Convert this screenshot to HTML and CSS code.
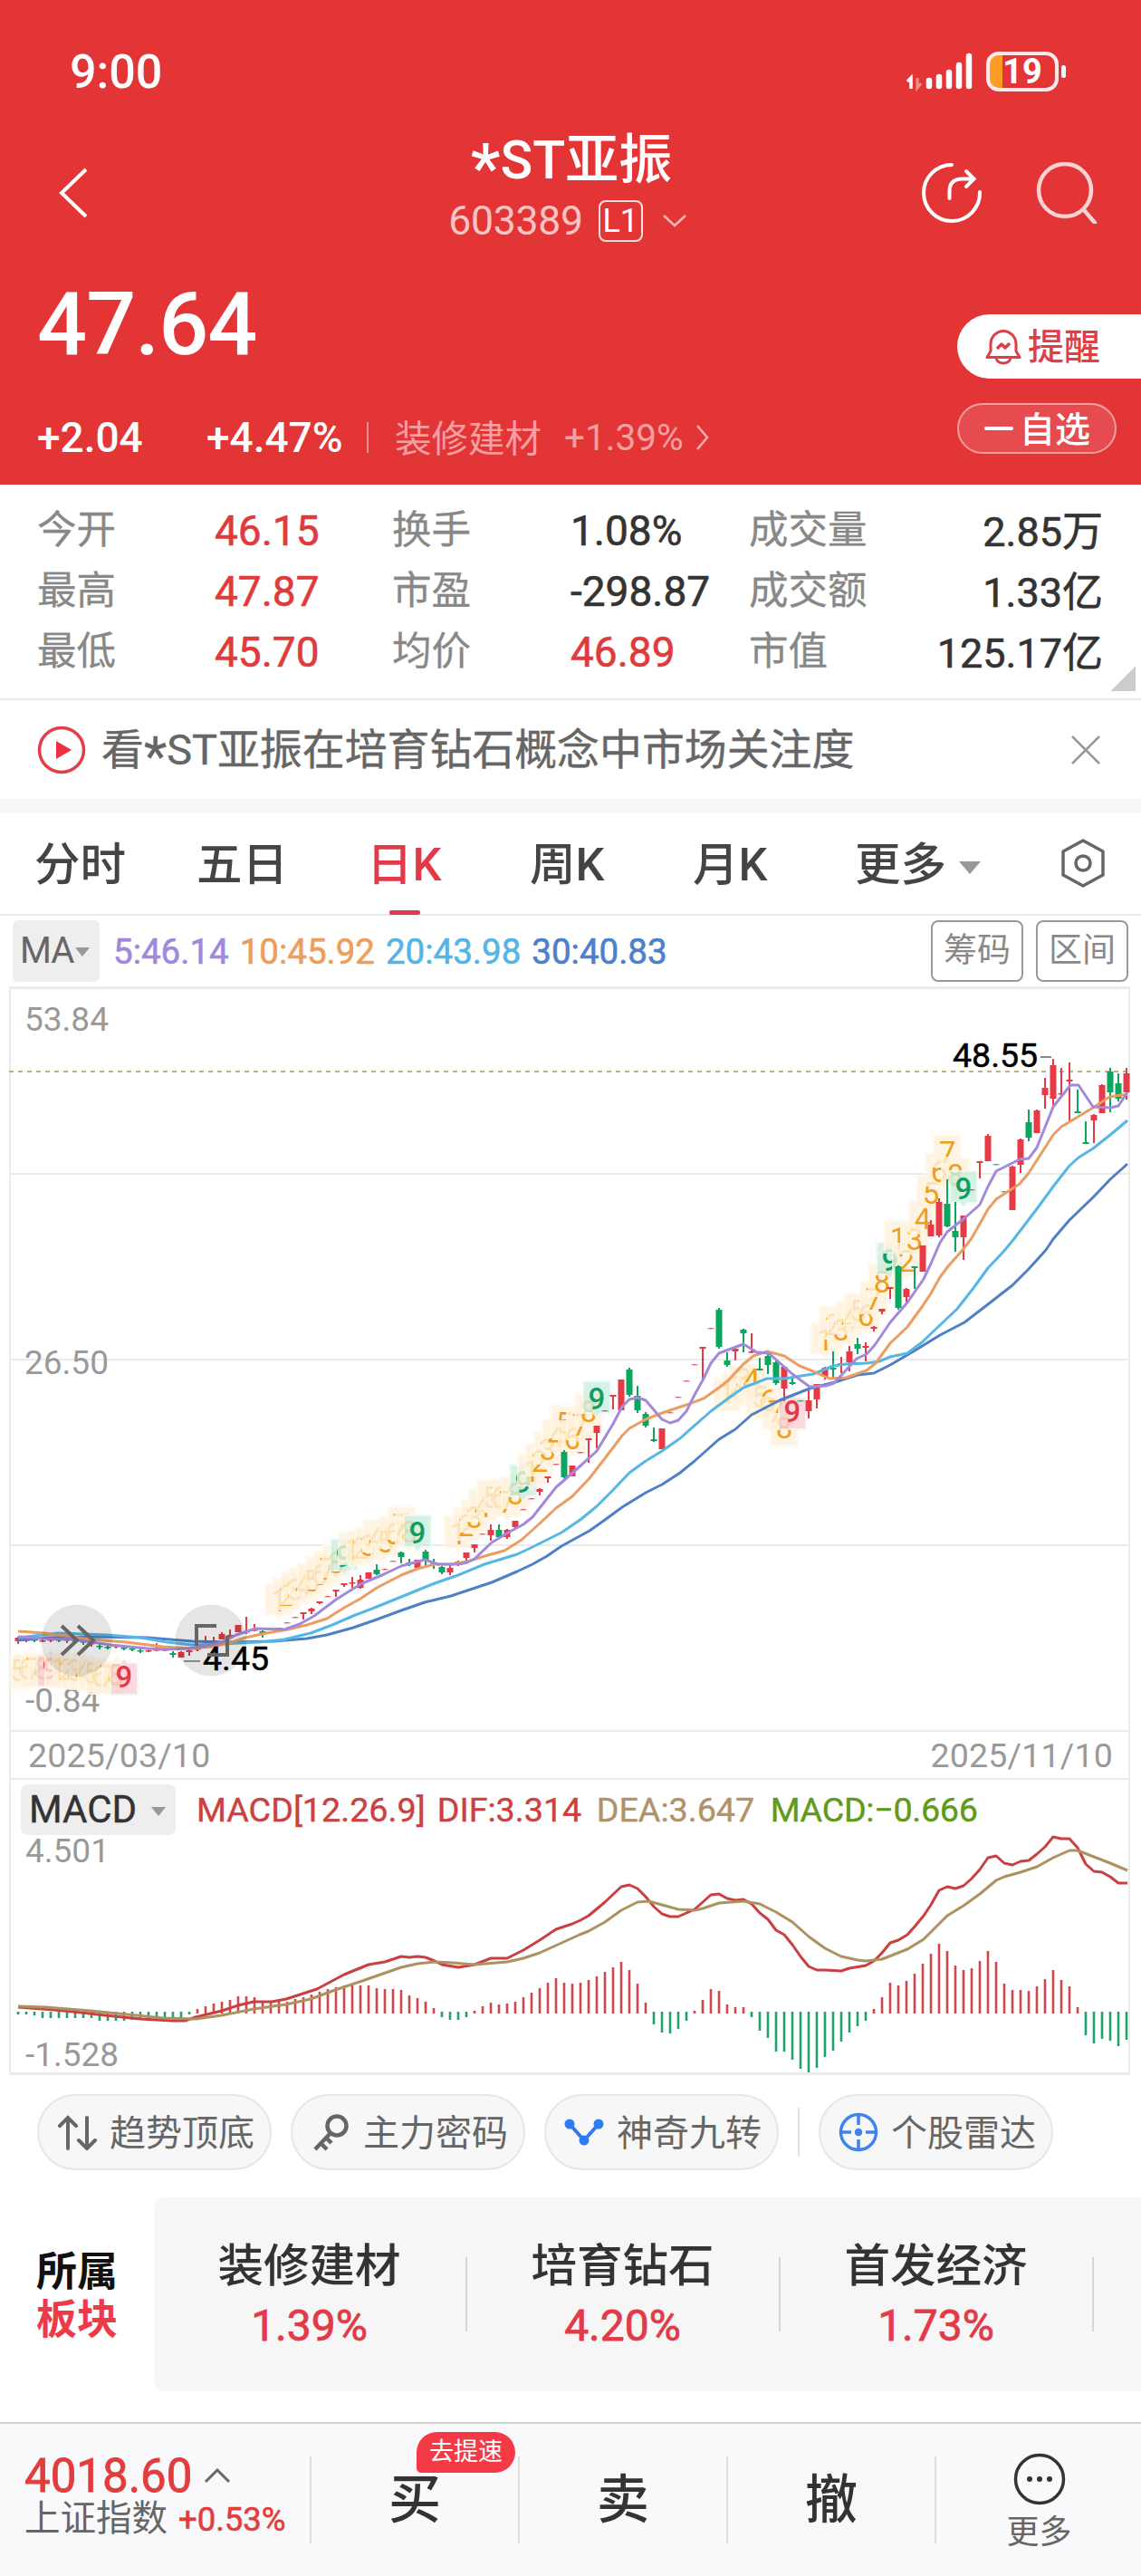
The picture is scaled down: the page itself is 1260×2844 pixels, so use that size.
FILE: index.html
```html
<!DOCTYPE html>
<html lang="zh-CN">
<head>
    <meta charset="UTF-8">
    <meta name="viewport" content="width=device-width, initial-scale=1.0">
    <title>*ST亚振 603389</title>
    <link rel="stylesheet" href="styles.css">
</head>
<body>
    <header class="top">
        <div class="status-bar">
            <span class="clock">9:00</span>
            <div class="status-icons">
                <svg width="74" height="44" viewBox="0 0 74 44">
                    <path d="M1 33l4-4v12" fill="none" stroke="#fff" stroke-width="3.500"/>
                    <path d="M12 29v11l4-5" fill="none" stroke="#f08f8f" stroke-width="3"/>
                    <g stroke="#fff" stroke-width="6.500" stroke-linecap="round">
                        <path d="M25 32v6M36 28v10M47 23v15M58 15v23M69 5v33"/>
                    </g>
                </svg>
                <div class="battery"><span>19</span></div>
            </div>
        </div>

        <div class="nav">
            <svg class="back" width="34" height="58" viewBox="0 0 34 58">
                <path d="M31 3L4 29l27 26" fill="none" stroke="#fff" stroke-width="4"/>
            </svg>
            <div class="title">
                <h1><span class="star">*</span>ST亚振</h1>
                <div class="code">
                    <span>603389</span>
                    <span class="level">L1</span>
                    <svg width="28" height="16" viewBox="0 0 28 16"><path d="M2 2l12 11L26 2" fill="none" stroke="#f8b4b4" stroke-width="2.5"/></svg>
                </div>
            </div>
            <div class="nav-icons">
                <svg width="68" height="68" viewBox="0 0 68 68" fill="none" stroke="#fff" stroke-width="4" stroke-linecap="round">
                    <path d="M34 3A31 31 0 1 0 65 33"/>
                    <path d="M31.500 40V32Q31.500 18.500 46 18.500H57M50 10l8.500 8.500L50 27"/>
                </svg>
                <svg width="68" height="68" viewBox="0 0 68 68" fill="none" stroke="#fbd3d3" stroke-width="4.500" stroke-linecap="round">
                    <circle cx="32" cy="31" r="29"/>
                    <path d="M54 54l11 13"/>
                </svg>
            </div>
        </div>

        <div class="quote">
            <div>
                <div class="price">47.64</div>
                <div class="change">
                    <span class="diff">+2.04</span>
                    <span class="pct">+4.47%</span>
                    <i></i>
                    <span class="sector">装修建材</span>
                    <span class="sector-pct">+1.39%</span>
                    <svg width="16" height="30" viewBox="0 0 16 30"><path d="M2 2l11 13L2 28" fill="none" stroke="#f6b0b0" stroke-width="2.5"/></svg>
                </div>
            </div>
            <div class="pills">
                <div class="pill remind">
                    <svg width="40" height="40" viewBox="0 0 40 40" fill="none" stroke="#dc3f45" stroke-width="3" stroke-linejoin="round">
                        <path d="M2 31.500l4-7V17a14 14.500 0 0 1 28 0v7.500l4 7zM12 33q2 5 8 5t8-5"/>
                        <path d="M13 22l5-5 4 4 5-5" stroke-width="3.500"/>
                    </svg>
                    <span>提醒</span>
                </div>
                <div class="pill watch"><b></b><span>自选</span></div>
            </div>
        </div>
    </header>

    <section class="stats">
        <span class="label">今开</span><span class="up">46.15</span>
        <span class="label">换手</span><span>1.08%</span>
        <span class="label">成交量</span><span class="end">2.85万</span>
        <span class="label">最高</span><span class="up">47.87</span>
        <span class="label">市盈</span><span>-298.87</span>
        <span class="label">成交额</span><span class="end">1.33亿</span>
        <span class="label">最低</span><span class="up">45.70</span>
        <span class="label">均价</span><span class="up">46.89</span>
        <span class="label">市值</span><span class="end">125.17亿</span>
        <div class="corner"></div>
    </section>

    <section class="banner">
        <svg width="54" height="54" viewBox="0 0 54 54">
            <circle cx="27" cy="27" r="24.500" fill="none" stroke="#e43c48" stroke-width="3.500"/>
            <path d="M21 17l17 10-17 10z" fill="#f0303e"/>
        </svg>
        <p>看<span class="star">*</span>ST亚振在培育钻石概念中市场关注度</p>
        <svg width="32" height="32" viewBox="0 0 32 32"><path d="M1 1l30 30M31 1L1 31" stroke="#999" stroke-width="2.500"/></svg>
    </section>

    <nav class="tabs">
        <span>分时</span>
        <span>五日</span>
        <span class="active">日K</span>
        <span>周K</span>
        <span>月K</span>
        <span>更多<i class="arrow"></i></span>
        <svg width="50" height="56" viewBox="0 0 50 56" fill="none" stroke="#666" stroke-width="3.500" stroke-linejoin="round">
            <path d="M25 3l22 12v26L25 53 3 41V15z"/>
            <circle cx="25" cy="28" r="8"/>
        </svg>
    </nav>

    <div class="ma-row">
        <div class="ma-select">MA<i class="arrow small"></i></div>
        <div class="ma-values">
            <span class="ma5">5:46.14</span>
            <span class="ma10">10:45.92</span>
            <span class="ma20">20:43.98</span>
            <span class="ma30">30:40.83</span>
        </div>
        <div class="outline-btn">筹码</div>
        <div class="outline-btn">区间</div>
    </div>

    <div class="charts">
        <svg id="kline" width="1234" height="820" viewBox="12 12 1234 820"></svg>
        <div class="dates"><span>2025/03/10</span><span>2025/11/10</span></div>
        <div class="macd-head">
            <div class="macd-select">MACD<i class="arrow small"></i></div>
            <span class="dif">MACD[12.26.9]</span>
            <span class="dif second">DIF:3.314</span>
            <span class="dea">DEA:3.647</span>
            <span class="macd">MACD:−0.666</span>
        </div>
        <svg id="macd" width="1234" height="258" viewBox="12 70 1234 258"></svg>
    </div>

    <div class="chips">
        <div class="chip">
            <svg width="44" height="40" viewBox="0 0 44 40" fill="none" stroke="#666" stroke-width="4" stroke-linecap="round"><path d="M12 38V4M3 13l9-9 9 9M33 4v34M24 29l9 9 9-9"/></svg>
            <span>趋势顶底</span>
        </div>
        <div class="chip">
            <svg width="44" height="44" viewBox="0 0 44 44" fill="none" stroke="#666" stroke-width="4.500"><circle cx="29" cy="15" r="10.500"/><path d="M22 23L5 41M11 34l7 7M17 28l6 6"/></svg>
            <span>主力密码</span>
        </div>
        <div class="chip">
            <svg width="44" height="32" viewBox="0 0 44 32" stroke="#2f7bf6" fill="#2f7bf6" stroke-width="4"><path d="M6 7l16 18L38 7" fill="none"/><circle cx="6" cy="7" r="3.500"/><circle cx="22" cy="25" r="3.500"/><circle cx="38" cy="7" r="3.500"/></svg>
            <span>神奇九转</span>
        </div>
        <i></i>
        <div class="chip">
            <svg width="44" height="44" viewBox="0 0 44 44" fill="none" stroke="#3f83ee" stroke-width="3.500"><circle cx="22" cy="22" r="19.500"/><path d="M22 2v12M22 30v12M2 22h12M30 22h12"/><circle cx="22" cy="22" r="2.500" fill="#3f83ee"/></svg>
            <span>个股雷达</span>
        </div>
    </div>

    <section class="blocks">
        <div class="blocks-title">所属<em>板块</em></div>
        <div class="blocks-list">
            <div class="block"><span>装修建材</span><b>1.39%</b></div>
            <div class="block"><span>培育钻石</span><b>4.20%</b></div>
            <div class="block"><span>首发经济</span><b>1.73%</b></div>
        </div>
    </section>

    <footer class="bottom">
        <div class="index">
            <div class="index-value">4018.60
                <svg width="30" height="18" viewBox="0 0 30 18"><path d="M2 16L15 3l13 13" fill="none" stroke="#666" stroke-width="3"/></svg>
            </div>
            <div class="index-name">上证指数<span>+0.53%</span></div>
        </div>
        <div class="action">买<span class="badge">去提速</span></div>
        <div class="action">卖</div>
        <div class="action">撤</div>
        <div class="more">
            <svg width="58" height="58" viewBox="0 0 58 58"><circle cx="29" cy="29" r="26.500" fill="none" stroke="#333" stroke-width="3.500"/><g fill="#333"><circle cx="18" cy="29" r="3"/><circle cx="29" cy="29" r="3"/><circle cx="40" cy="29" r="3"/></g></svg>
            更多
        </div>
    </footer>

    <script src="chart.js"></script>
</body>
</html>
```

FILE: styles.css
```css
* {
    box-sizing: border-box;
}
body {
    margin: 0;
    width: 1260px;
    height: 2844px;
    background: #fff;
    color: #333;
    font-family: Roboto, "Noto Sans CJK SC", sans-serif;
    display: flex;
    flex-direction: column;
    overflow: hidden;
}
svg {
    display: block;
    flex-shrink: 0;
}
i, em {
    font-style: normal;
}

/* red header */
.top {
    height: 535px;
    background: #e43536;
    color: #fff;
}
.status-bar {
    height: 118px;
    padding: 40px 84px 0 77px;
    display: flex;
    align-items: center;
    justify-content: space-between;
}
.clock {
    font-size: 52px;
    font-weight: 500;
}
.status-icons {
    display: flex;
    align-items: center;
    gap: 14px;
}
.battery {
    position: relative;
    width: 80px;
    height: 44px;
    margin-right: 7px;
    border: 4px solid #fdeaea;
    border-radius: 14px;
    background: linear-gradient(90deg, #fb9d24 14px, #e43536 14px);
    text-align: center;
    font-size: 38px;
    font-weight: 700;
    line-height: 37px;
}
.battery::after {
    content: "";
    position: absolute;
    right: -12px;
    top: 11px;
    width: 5px;
    height: 14px;
    border-radius: 3px;
    background: #fff;
}
.nav {
    height: 164px;
    padding: 0 48px 0 64px;
    display: grid;
    grid-template-columns: 1fr auto 1fr;
    align-items: center;
}
.back {
    margin-top: 26px;
}
.title {
    display: flex;
    flex-direction: column;
    align-items: center;
    gap: 6px;
    margin: 9px 22px 0 0;
}
h1 {
    margin: 0 0 0 8px;
    font-size: 59px;
    font-weight: 500;
    line-height: 72px;
}
.star {
    position: relative;
    top: 0.2em;
    font-size: 1.25em;
    line-height: 1px;
}
.code {
    height: 50px;
    display: flex;
    align-items: center;
    font-size: 44.500px;
    letter-spacing: -0.3px;
    color: #fbc4c4;
}
.level {
    width: 49px;
    height: 46px;
    margin: 0 21px 0 17px;
    border: 2px solid #fde0e0;
    border-radius: 8px;
    color: #fff;
    font-size: 36px;
    line-height: 43px;
    text-align: center;
}
.nav-icons {
    margin-top: 26px;
    display: flex;
    justify-content: flex-end;
    gap: 59px;
}
.quote {
    display: flex;
    justify-content: space-between;
}
.price {
    margin: 26px 0 47px 41px;
    font-size: 97px;
    font-weight: 500;
    line-height: 100px;
    letter-spacing: -1px;
}
.change {
    height: 56px;
    padding-left: 41px;
    display: flex;
    align-items: center;
    font-size: 46px;
    font-weight: 500;
}
.diff {
    width: 187px;
}
.pct {
    width: 177px;
}
.change i {
    width: 2px;
    height: 34px;
    margin-right: 29px;
    background: #f09090;
}
.sector {
    width: 187px;
    padding-bottom: 3px;
    font-size: 40.500px;
    font-weight: 400;
    color: #f5a0a0;
}
.sector-pct {
    width: 145px;
    font-size: 40.500px;
    font-weight: 400;
    color: #f5a0a0;
}
.pills {
    padding-top: 65px;
    display: flex;
    flex-direction: column;
    gap: 27px;
}
.pill {
    display: flex;
    align-items: center;
}
.pill span {
    padding-bottom: 5px;
}
.remind {
    width: 203px;
    height: 71px;
    padding-left: 31px;
    gap: 7px;
    border-radius: 36px 0 0 36px;
    background: #fff;
    color: #dc3f45;
    font-size: 40px;
    font-weight: 500;
}
.watch {
    width: 176px;
    height: 56px;
    padding-left: 28px;
    gap: 7px;
    border: 2px solid #f3a0a0;
    border-radius: 28px;
    background: #e64c4f;
    font-size: 39px;
    font-weight: 500;
}
.watch b {
    width: 32px;
    height: 4px;
    border-radius: 2px;
    background: #fff;
}

/* day figures */
.stats {
    position: relative;
    height: 238px;
    padding: 17px 42px 0 41px;
    display: grid;
    grid-template-columns: 196px 196px 197px 197px 130px 1fr;
    grid-auto-rows: 67px;
    align-items: center;
    border-bottom: 2px solid #e9e9e9;
    font-size: 46px;
    white-space: nowrap;
    -webkit-text-stroke: 0.6px;
}
.stats .label {
    padding-bottom: 8px;
    font-size: 43.500px;
    color: #888;
    -webkit-text-stroke: 0.3px;
}
.stats .up {
    color: #e03b3b;
}
.stats .end {
    padding-bottom: 4px;
    font-size: 45px;
    text-align: right;
}
.corner {
    position: absolute;
    right: 6px;
    bottom: 8px;
    width: 27px;
    height: 27px;
    background: linear-gradient(135deg, transparent 50%, #ccc 50%);
}
.banner {
    height: 124px;
    padding: 0 45px 0 41px;
    display: flex;
    align-items: center;
    border-bottom: 15px solid #f6f6f6;
}
.banner p {
    flex: 1;
    margin: 0 0 8px 17px;
    font-size: 46.900px;
    color: #666;
    white-space: nowrap;
    -webkit-text-stroke: 0.4px;
}

/* period tabs */
.tabs {
    height: 114px;
    padding-left: 38px;
    display: grid;
    grid-template-columns: 179px 188px 180px 180px 179px 227px 1fr;
    align-items: center;
    border-bottom: 2px solid #e9e9e9;
    font-size: 50.500px;
    font-weight: 500;
    color: #444;
}
.tabs span {
    margin-bottom: 7px;
}
.tabs .active {
    position: relative;
    color: #e23a48;
}
.tabs .active::after {
    content: "";
    position: absolute;
    left: 25px;
    bottom: -23px;
    width: 34px;
    height: 5px;
    border-radius: 2px;
    background: #d9404c;
}
.arrow {
    display: inline-block;
    margin-left: 14px;
    vertical-align: 7px;
    border: 12px solid transparent;
    border-top: 14px solid #999;
    border-bottom: 0;
}
.arrow.small {
    margin-left: 2px;
    border-width: 10px 8px 0;
    vertical-align: 7px;
}
.ma-row {
    height: 78px;
    padding: 0 14px;
    display: flex;
    align-items: center;
    gap: 14px;
}
.ma-select {
    width: 96px;
    height: 68px;
    padding-left: 8px;
    border-radius: 6px;
    background: #eee;
    color: #666;
    font-size: 40px;
    line-height: 68px;
    letter-spacing: -1px;
    white-space: nowrap;
}
.ma-values {
    flex: 1;
    padding-left: 1px;
    display: flex;
    gap: 12px;
    font-size: 38.500px;
    -webkit-text-stroke: 0.6px;
}
.ma5 { color: #a088dc; }
.ma10 { color: #ec9e5c; }
.ma20 { color: #54b5e5; }
.ma30 { color: #4b80ca; }
.outline-btn {
    width: 102px;
    height: 68px;
    border: 2px solid #999;
    border-radius: 8px;
    color: #888;
    font-size: 37px;
    line-height: 63px;
    text-align: center;
}

/* charts */
.charts {
    width: 1238px;
    height: 1202px;
    margin-left: 10px;
    border: 2px solid #ebebeb;
    border-width: 3px 2px;
    flex-shrink: 0;
}
.charts svg {
    overflow: visible;
}
.axis {
    fill: #999;
    font-size: 37px;
}
.peak {
    fill: #000;
    stroke: #000;
    stroke-width: 0.5px;
    font-size: 37.500px;
}
.tag {
    font-size: 33px;
    text-anchor: middle;
}
.tag.nine {
    font-weight: 500;
}
.dates {
    height: 53px;
    padding: 0 17px 0 19px;
    display: flex;
    align-items: center;
    justify-content: space-between;
    border-bottom: 2px solid #ebebeb;
    color: #999;
    font-size: 37.500px;
    letter-spacing: 0.2px;
}
.macd-head {
    height: 65px;
    padding-left: 11px;
    display: flex;
    align-items: center;
    font-size: 37.700px;
    -webkit-text-stroke: 0.4px;
}
.macd-select {
    width: 171px;
    height: 56px;
    margin-right: 23px;
    padding-left: 9px;
    border-radius: 8px;
    background: #eee;
    color: #333;
    font-size: 42px;
    line-height: 56px;
}
.macd-select .arrow {
    margin-left: 16px;
}
.dif { color: #cb4040; }
.second { width: 176px; margin-left: 13px; }
.dea { width: 192px; color: #b0926a; }
.macd { color: #5f9a1a; letter-spacing: -0.3px; }

.chips {
    height: 135px;
    padding: 21px 0 0 41px;
    display: flex;
    gap: 21px;
}
.chip {
    width: 259px;
    height: 84px;
    padding-left: 20px;
    display: flex;
    align-items: center;
    gap: 14px;
    border: 2px solid #e6e6e6;
    border-radius: 42px;
    background: #f7f7f7;
    color: #666;
    font-size: 40px;
    white-space: nowrap;
}
.chip span {
    padding-bottom: 5px;
}
.chips > i {
    width: 2px;
    height: 54px;
    margin-top: 15px;
    background: #e2e2e2;
}

.blocks {
    height: 214px;
    display: flex;
    align-items: center;
}
.blocks-title {
    width: 170px;
    padding: 3px 0 0 40px;
    color: #111;
    font-size: 45px;
    font-weight: 700;
    line-height: 53px;
}
.blocks-title em {
    display: block;
    color: #ee3a46;
}
.blocks-list {
    flex: 1;
    height: 214px;
    display: flex;
    border-radius: 12px 0 0 12px;
    background: #f6f6f6;
}
.block {
    width: 346px;
    height: 82px;
    margin-top: 66px;
    padding: 3px 1px 0 0;
    display: flex;
    flex-direction: column;
    align-items: center;
    justify-content: center;
    border-right: 2px solid #d4d4d4;
    font-size: 50.500px;
    font-weight: 500;
    line-height: 66px;
}
.block b {
    color: #e23a48;
    font-size: 48px;
    font-weight: 400;
    -webkit-text-stroke: 0.8px;
}

/* trade bar */
.bottom {
    height: 170px;
    margin-top: 34px;
    padding-top: 36px;
    display: flex;
    border-top: 2px solid #d2d2d4;
    background: #f9f9fb;
}
.index {
    width: 344px;
    height: 96px;
    padding-left: 27px;
    border-right: 2px solid #dededf;
}
.index-value {
    height: 42px;
    display: flex;
    align-items: center;
    gap: 13px;
    color: #e23d3d;
    font-size: 51px;
    -webkit-text-stroke: 0.8px;
}
.index-name {
    margin-top: 5px;
    color: #666;
    font-size: 39.500px;
    line-height: 44px;
    white-space: nowrap;
}
.index-name span {
    margin-left: 12px;
    color: #e23d3d;
    font-size: 36.500px;
    -webkit-text-stroke: 0.6px;
}
.action {
    position: relative;
    width: 230px;
    height: 96px;
    border-right: 2px solid #dededf;
    font-size: 58px;
    font-weight: 500;
    line-height: 97px;
    text-align: center;
}
.badge {
    position: absolute;
    left: 116px;
    top: -27px;
    width: 109px;
    height: 45px;
    border-radius: 23px 23px 23px 5px;
    background: #f43a47;
    color: #fff;
    font-size: 27px;
    font-weight: 400;
    line-height: 44px;
    z-index: 1;
}
.more {
    flex: 1;
    display: flex;
    flex-direction: column;
    align-items: center;
    margin: -4px 0 0 1px;
    color: #666;
    font-size: 36px;
    line-height: 61px;
}
```

FILE: chart.js
```js
const RED = '#e63a46';
const GREEN = '#0ca65f';
const kline = document.getElementById('kline');
const macd = document.getElementById('macd');

// each day is 9px wide
function dayX(i) {
    return 20 + i * 9;
}

function add(svg, name, attrs, text) {
    const el = document.createElementNS('http://www.w3.org/2000/svg', name);
    for (const key in attrs) el.setAttribute(key, attrs[key]);
    if (text) el.textContent = text;
    svg.appendChild(el);
    return el;
}

// day, colour, high, body top, body bottom, low
const candles = [
    [0,'r',727,728,732,735],[1,'r',727,730,731,733],[2,'g',727,730,731,733],[3,'r',728,731,732,733],[4,'r',728,730,731,733],
    [5,'g',728,730,731,733],[6,'r',728,730,731,734],[7,'g',729,731,732,735],[8,'g',730,732,733,736],[9,'r',732,734,735,738],
    [10,'g',734,737,738,741],[11,'g',735,738,739,741],[12,'r',736,737,738,740],[13,'g',737,739,740,742],[14,'g',738,740,741,743],
    [15,'g',739,742,743,745],[16,'r',740,742,743,744],[17,'r',734,741,742,743],[18,'r',739,741,742,743],[19,'g',743,745,747,750],
    [20,'r',743,744,750,750],[21,'r',741,742,744,748],[22,'r',739,740,741,743],[23,'r',726,732,733,734],[24,'r',727,731,732,734],
    [25,'r',722,724,730,730],[26,'r',719,725,726,728],[27,'r',714,714,722,722],[28,'r',705,721,722,724],[29,'r',713,719,720,721],
    [30,'g',720,721,725,728],[32,'r',717,717,718,719],[33,'r',711,711,712,712],[34,'r',705,705,706,706],[35,'r',700,700,702,708],
    [36,'r',695,696,699,702],[37,'r',688,688,690,691],[38,'r',682,682,683,683],[39,'r',675,675,677,683],[40,'r',668,668,670,672],
    [41,'r',661,667,668,673],[42,'r',659,664,673,674],[43,'r',656,656,663,663],[44,'g',647,653,658,659],[45,'r',652,652,653,653],
    [46,'r',643,643,644,644],[47,'g',633,634,639,646],[48,'g',641,645,646,649],[49,'r',642,642,651,651],[50,'g',631,633,643,649],
    [51,'g',641,646,648,652],[52,'g',649,650,656,658],[53,'r',648,651,656,659],[54,'r',643,644,648,649],[55,'r',634,634,640,645],
    [56,'r',625,625,629,634],[57,'r',613,613,614,614],[58,'r',603,609,615,621],[59,'g',603,609,617,617],[60,'r',608,609,617,619],
    [61,'r',599,599,606,607],[62,'r',586,586,587,587],[63,'r',574,574,575,575],[64,'r',563,564,567,571],[65,'r',550,550,552,557],
    [66,'r',536,536,537,537],[67,'g',521,523,551,552],[68,'r',538,538,550,550],[69,'r',523,523,524,524],[70,'r',508,508,510,535],
    [71,'r',494,494,502,519],[72,'r',477,477,478,478],[73,'r',460,460,462,476],[74,'r',443,443,477,477],[75,'g',430,432,460,462],
    [76,'g',450,461,477,480],[77,'g',479,481,494,496],[78,'g',496,509,511,512],[79,'r',497,497,520,520],[80,'r',479,479,480,480],
    [81,'r',462,462,463,463],[82,'r',444,444,445,445],[83,'r',426,426,427,427],[84,'r',407,407,409,442],[85,'r',386,386,387,387],
    [86,'g',364,366,407,409],[87,'g',413,422,427,429],[88,'r',409,409,412,422],[89,'g',387,388,392,413],[90,'r',392,412,413,414],
    [91,'g',419,431,433,433],[92,'g',413,417,427,437],[93,'g',422,424,447,449],[94,'r',429,429,453,467],[95,'g',441,446,448,449],
    [96,'g',466,466,467,467],[97,'r',453,466,478,486],[98,'r',448,448,465,475],[99,'r',429,430,440,443],[100,'g',412,430,432,443],
    [101,'r',418,425,426,436],[102,'r',406,412,424,434],[103,'g',397,404,409,415],[104,'r',402,406,408,423],[105,'r',384,385,387,390],
    [106,'r',365,365,368,371],[107,'r',341,341,343,354],[108,'g',317,318,364,366],[109,'r',342,343,352,360],[110,'g',318,318,320,343],
    [111,'r',295,295,324,324],[112,'r',267,272,285,285],[113,'r',243,247,284,286],[114,'g',222,249,274,275],[115,'g',247,279,286,302],
    [116,'r',262,262,286,311],[117,'r',233,233,234,234],[118,'r',202,202,204,221],[119,'r',172,174,202,202],[120,'g',205,205,206,206],
    [121,'g',235,235,236,236],[122,'r',207,208,256,256],[123,'r',177,178,206,215],[124,'g',145,159,176,180],[125,'r',145,146,171,171],
    [126,'r',110,121,129,144],[127,'r',89,96,133,144],[128,'r',99,127,128,129],[129,'r',93,112,114,157],[130,'g',123,147,149,149],
    [131,'g',158,181,183,183],[132,'r',150,151,157,182],[133,'r',117,118,149,149],[134,'g',99,103,126,148],[135,'g',105,116,133,136],
    [136,'r',99,105,126,134]
];

const averages = {
    '#4f80c6': '20,731 53,728 102,727 163,728 212,732 253,733 302,732 339,729 361,725 390,717 416,708 443,698 469,689 498,682 543,667 571,655 588,647 604,638 620,627 651,610 668,598 687,584 713,568 731,559 751,546 767,533 794,509 812,498 830,482 861,466 894,453 922,446 947,438 965,436 983,427 1012,410 1038,394 1065,380 1091,360 1118,339 1136,321 1155,300 1163,288 1181,267 1208,241 1226,222 1245,205',
    '#56b6e4': '20,728 65,723 118,725 155,728 184,733 212,736 245,735 286,733 314,730 343,723 367,714 390,704 416,694 443,683 480,668 506,659 535,647 571,636 588,628 604,620 620,612 642,597 659,583 677,565 695,546 713,533 731,522 751,508 785,478 804,464 821,452 847,442 866,442 898,437 920,428 934,426 957,425 971,423 983,418 1002,414 1018,402 1038,383 1057,365 1075,342 1091,320 1108,302 1118,290 1147,252 1163,230 1181,207 1191,198 1207,188 1226,173 1245,157',
    '#eb9d62': '20,721 49,723 102,730 139,733 180,738 212,740 233,738 253,734 271,728 294,723 318,719 339,714 361,707 380,695 398,685 416,673 443,659 461,652 480,647 498,647 516,644 535,638 557,632 576,620 596,602 614,585 632,572 651,552 668,530 687,505 695,497 713,487 731,480 758,471 777,464 794,452 804,444 821,426 832,417 847,412 866,417 883,428 898,434 916,442 934,441 957,433 967,425 983,403 1002,385 1018,363 1028,348 1038,330 1047,318 1063,300 1073,287 1091,255 1100,244 1126,227 1136,215 1163,173 1172,164 1207,143 1225,131 1245,128',
    '#a389dc': '20,727 49,729 82,730 102,733 122,736 163,740 184,741 208,740 227,737 245,733 261,725 282,718 314,719 331,713 347,704 371,686 398,669 424,658 443,649 469,642 484,647 506,647 516,645 524,641 543,623 563,611 578,603 588,595 614,562 638,541 659,522 677,492 687,473 695,465 704,463 713,466 731,487 740,491 749,488 758,478 767,460 777,442 785,425 794,414 821,404 836,413 849,414 875,437 894,451 912,450 921,447 946,420 957,415 966,405 983,380 1002,358 1020,332 1028,315 1038,292 1046,280 1065,265 1082,250 1091,230 1100,213 1126,200 1136,199 1145,187 1163,142 1182,118 1191,118 1207,142 1226,143 1235,141 1245,126'
};

function drawGrid() {
    [216, 421, 626, 831].forEach(y => {
        add(kline, 'path', { d: `M12 ${y}H1246`, stroke: '#ebebeb', 'stroke-width': 2 });
    });
    add(kline, 'path', { d: 'M10 103H1246', stroke: '#b9b08e', 'stroke-width': 2, 'stroke-dasharray': '5 5' });
    add(kline, 'text', { x: 27, y: 58, class: 'axis' }, '53.84');
    add(kline, 'text', { x: 27, y: 437, class: 'axis' }, '26.50');
    add(kline, 'text', { x: 28, y: 810, class: 'axis' }, '-0.84');
}

// count label 1..9, above the high or below the low
function drawTag(i, n, above) {
    const day = candles.find(c => c[0] === i) || [i, 'r', 720];
    const x = dayX(i);
    const nine = n === 9;
    const y = above ? day[2] - 9 : day[5] + 9;
    const s = above ? -1 : 1;
    const bg = !nine ? '#fff2dd' : above ? '#cdeee0' : '#fbd0d6';
    const fg = !nine ? '#ef9f20' : above ? '#0e9f5e' : '#e0394a';
    const left = Math.max(x - 15, 12);
    add(kline, 'path', {
        d: `M${x} ${y}l4 ${5 * s}h11v${35 * s}H${left}v${-35 * s}H${x - 4}z`,
        fill: bg, stroke: nine ? '#eefaf4' : '#fff8ea', 'stroke-width': 2, opacity: 0.8
    });
    add(kline, 'text', { x: x, y: above ? y - 9 : y + 32, fill: fg, class: nine ? 'tag nine' : 'tag' }, String(n));
}

function drawTags() {
    for (let i = 0; i <= 4; i++) drawTag(i, i + 5, false);
    for (let i = 5; i <= 13; i++) drawTag(i, i - 4, false);
    for (let i = 87; i <= 95; i++) drawTag(i, i - 86, false);
    [32, 41, 54, 63, 99, 108].forEach(start => {
        for (let n = 1; n <= 9; n++) drawTag(start + n - 1, n, true);
    });
}

function drawCandles() {
    candles.forEach(([i, c, high, top, bottom, low]) => {
        const x = dayX(i);
        const color = c === 'r' ? RED : GREEN;
        const thin = low - high < 2;
        add(kline, 'path', { d: `M${x} ${high}V${low}`, stroke: color, 'stroke-width': 2 });
        add(kline, 'rect', { x: x - 3.5, y: top, width: 7, height: Math.max(bottom - top, 1.5), fill: color, opacity: thin ? 0.6 : 1 });
    });
}

function drawOverlay() {
    add(kline, 'circle', { cx: 85, cy: 731, r: 39.5, fill: '#000', opacity: 0.1 });
    add(kline, 'circle', { cx: 233, cy: 731, r: 39.5, fill: '#000', opacity: 0.1 });
    add(kline, 'path', { d: 'M203 754h18M1149 87h12', stroke: '#888', 'stroke-width': 2 });
    add(kline, 'text', { x: 224, y: 764, class: 'peak' }, '4.45');
    add(kline, 'text', { x: 1052, y: 98, class: 'peak' }, '48.55');
    add(kline, 'path', {
        d: 'M68 715l17 16-17 16M86 715l17 16-17 16M239 715H217V737M251 726V747H229',
        fill: 'none', stroke: '#666', 'stroke-width': 4
    });
}

const bars = [
    -2,-2,-3,-6,-6,-6,-6,-6,-6,-6,-9,-9,-9,-9,-8,-8,-8,-8,-7,-6,-6,-2,
    4,7,10,12,14,18,18,17,12,12,12,12,15,17,20,23,26,28,30,30,30,30,27,26,26,25,19,16,12,5,
    -5,-8,-8,-5,
    2,7,11,9,10,12,17,22,27,33,38,33,32,33,36,40,45,50,56,47,32,11,
    -13,-22,-23,-18,-9,
    2,14,26,24,9,6,6,
    -5,-20,-28,-43,-43,-52,-62,-66,-61,-49,-42,-32,-22,-15,-9,
    4,17,33,30,35,43,54,65,76,68,52,47,49,57,68,56,32,25,25,24,29,37,47,36,29,6,
    -25,-34,-29,-31,-37,-30
];
const dif = '20,256 60,259 90,262 116,265 155,269 190,271 204,271 216,267 245,260 263,254 280,250 300,250 316,247 350,236 380,220 407,209 425,206 443,200 452,201 461,200 470,201 480,205 488,209 506,212 524,209 542,202 560,202 578,193 596,182 614,170 632,164 641,160 650,155 668,140 686,123 695,121 704,125 713,134 722,145 731,153 740,156 749,156 758,152 767,148 776,140 785,132 794,131 803,136 812,138 821,137 830,142 839,152 848,159 857,171 866,176 875,187 884,200 893,211 902,215 911,215 929,216 938,213 956,210 965,205 974,196 983,185 992,182 1002,176 1011,166 1020,155 1028,143 1037,127 1046,123 1055,125 1064,122 1073,114 1082,104 1091,91 1100,89 1109,97 1118,99 1127,95 1136,94 1145,87 1154,79 1163,68 1172,70 1181,70 1190,80 1199,98 1208,106 1217,107 1226,112 1235,119 1245,119';
const dea = '20,255 50,256 100,260 140,264 180,268 216,269 245,265 280,258 316,253 343,247 370,237 400,227 443,212 461,208 480,206 500,207 524,209 560,206 578,202 596,196 640,176 650,172 668,162 686,149 704,140 716,139 731,143 749,148 767,149 776,147 794,141 821,139 839,142 857,151 875,162 893,178 911,191 929,200 947,204 956,205 974,203 1002,192 1020,181 1037,164 1046,155 1064,144 1082,131 1100,116 1109,112 1127,107 1145,101 1163,91 1181,83 1190,83 1208,90 1226,97 1245,105';

function line(svg, points, color) {
    add(svg, 'polyline', { points: points, fill: 'none', stroke: color, 'stroke-width': 3, 'stroke-linejoin': 'round' });
}

function drawMacd() {
    bars.forEach((h, i) => {
        add(macd, 'path', {
            d: `M${dayX(i)} ${h > 0 ? 263 : 261}V${262 - h}`,
            stroke: h > 0 ? '#d0484e' : '#1fa36d', 'stroke-width': 2.6
        });
    });
    line(macd, dif, '#cb3f40');
    line(macd, dea, '#ab9260');
    add(macd, 'text', { x: 28, y: 96, class: 'axis' }, '4.501');
    add(macd, 'text', { x: 28, y: 321, class: 'axis' }, '-1.528');
}

drawGrid();
drawTags();
drawCandles();
for (const color in averages) line(kline, averages[color], color);
drawOverlay();
drawMacd();
```
